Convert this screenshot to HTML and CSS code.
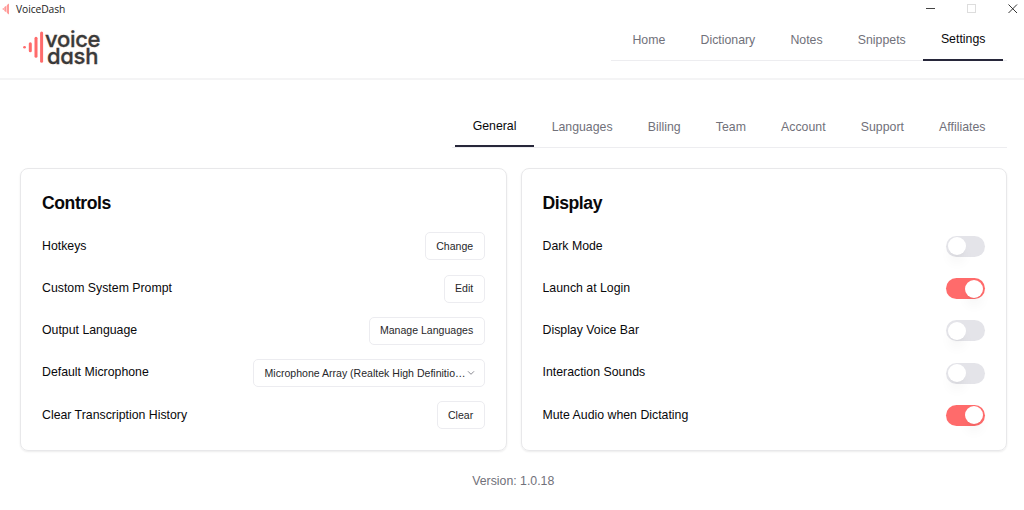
FILE: index.html
```html
<!DOCTYPE html>
<html lang="en">
<head>
  <meta charset="UTF-8">
  <title>VoiceDash</title>
  <link rel="stylesheet" href="styles.css">
</head>
<body>

  <div class="titlebar">
    <svg class="app-icon" width="8" height="12" viewBox="0 0 8 12">
      <path d="M0 6L2 5V7ZM2.3 4L4.4 2.8V9.2L2.3 8ZM4.9 2L7 0.5V11.5L4.9 10Z" fill="#ff9a98"/>
    </svg>
    <span class="app-title">VoiceDash</span>
    <svg class="window-buttons" width="94" height="12" viewBox="0 0 94 12" fill="none">
      <path d="M1 5.5H10" stroke="#444"/>
      <rect x="42.5" y="1.5" width="8" height="8" stroke="#ddd"/>
      <path d="M83.5 1.5L92 10M92 1.5L83.5 10" stroke="#333"/>
    </svg>
  </div>

  <header class="header">
    <div class="logo">
      <svg width="22" height="34" viewBox="0 0 22 34" stroke="#ff6b6b" stroke-linecap="round">
        <path d="M2.5 17.3H2.6" stroke-width="2.6"/>
        <path d="M8.3 13.7V20.7" stroke-width="3"/>
        <path d="M14 8.3V26.2" stroke-width="3"/>
        <path d="M19.6 3V31.3" stroke-width="3"/>
      </svg>
      <div class="logo-text">
        <div class="logo-voice">voice</div>
        <div class="logo-dash">dash</div>
      </div>
    </div>
    <nav class="tabs">
      <a class="tab">Home</a>
      <a class="tab">Dictionary</a>
      <a class="tab">Notes</a>
      <a class="tab">Snippets</a>
      <a class="tab active">Settings</a>
    </nav>
  </header>

  <main class="content">
    <nav class="tabs">
      <a class="tab active">General</a>
      <a class="tab">Languages</a>
      <a class="tab">Billing</a>
      <a class="tab">Team</a>
      <a class="tab">Account</a>
      <a class="tab">Support</a>
      <a class="tab">Affiliates</a>
    </nav>

    <div class="cards">
      <section class="card">
        <h2>Controls</h2>
        <div class="row"><span>Hotkeys</span><button class="btn">Change</button></div>
        <div class="row"><span>Custom System Prompt</span><button class="btn">Edit</button></div>
        <div class="row"><span>Output Language</span><button class="btn">Manage Languages</button></div>
        <div class="row">
          <span>Default Microphone</span>
          <button class="btn select">
            <span>Microphone Array (Realtek High Definitio…</span>
            <svg width="8" height="6" viewBox="0 0 8 6" fill="none">
              <path d="M1 1.3L4 4.3L7 1.3" stroke="#8b8b93"/>
            </svg>
          </button>
        </div>
        <div class="row"><span>Clear Transcription History</span><button class="btn">Clear</button></div>
      </section>

      <section class="card">
        <h2>Display</h2>
        <div class="row"><span>Dark Mode</span><div class="switch"><div class="thumb"></div></div></div>
        <div class="row"><span>Launch at Login</span><div class="switch on"><div class="thumb"></div></div></div>
        <div class="row"><span>Display Voice Bar</span><div class="switch"><div class="thumb"></div></div></div>
        <div class="row"><span>Interaction Sounds</span><div class="switch"><div class="thumb"></div></div></div>
        <div class="row"><span>Mute Audio when Dictating</span><div class="switch on"><div class="thumb"></div></div></div>
      </section>
    </div>

    <div class="version">Version: 1.0.18</div>
  </main>

</body>
</html>
```
FILE: styles.css
```css
* {
  box-sizing: border-box;
}
body {
  margin: 0;
  height: 510px;
  overflow: hidden;
  background-color: #fff;
  font-family: "Liberation Sans", Arial, sans-serif;
  font-size: 12.32px;
  color: #09090b;
}
.titlebar {
  display: flex;
  align-items: center;
  height: 20px;
  padding: 0 5px 2px 2px;
}
.app-title {
  margin-left: 6px;
  font-family: "Open Sans", sans-serif;
  font-size: 10.3px;
  letter-spacing: -0.1px;
  color: #222;
}
.window-buttons {
  margin-left: auto;
}
.header {
  display: flex;
  justify-content: space-between;
  height: 60px;
  padding: 0 17.5px 0 22px;
  border-bottom: 2px solid #f4f4f5;
}
.logo {
  display: flex;
  padding-top: 10px;
}
.logo-text {
  margin-left: 1px;
  padding-top: 1px;
  font-family: Inter, sans-serif;
  font-feature-settings: "cv11";
  font-size: 22px;
  font-weight: 500;
  line-height: 17px;
  letter-spacing: -0.3px;
  color: #3a3a3a;
  -webkit-text-stroke: 0.3px #3a3a3a;
  text-shadow: 0 0 3px #ffe9dc;
}
.logo-dash {
  padding-left: 2px;
}
.tabs {
  display: flex;
  height: 41px;
  padding: 0 3.5px;
  border-bottom: 1px solid #ededf0;
}
.tab {
  padding: 0 17.6px;
  line-height: 40px;
  color: #71717a;
}
.tab.active {
  height: 40px;
  border-bottom: 2px solid #27273a;
  line-height: 39px;
  color: #09090b;
}
.header .tab.active {
  height: 41px;
}
.content {
  padding: 27px 17.5px 0 20px;
}
.content .tabs {
  width: max-content;
  margin-left: auto;
}
.cards {
  display: grid;
  grid-template-columns: 1fr 1fr;
  gap: 14px;
  margin: 20px -0.5px 0 0;
}
.card {
  height: 283px;
  padding: 22px 21px 0;
  border: 1px solid #e8e8ea;
  border-radius: 8px;
  box-shadow: 0 1px 2px rgba(0, 0, 0, 0.08);
}
h2 {
  margin: 0;
  padding-top: 1px;
  height: 34.4px;
  font-size: 17.6px;
  line-height: 22px;
  letter-spacing: -0.44px;
}
.row {
  display: flex;
  align-items: center;
  justify-content: space-between;
  height: 42.2px;
}
.row > span {
  margin-top: -1.2px;
}
.btn {
  height: 28px;
  padding: 0 10.3px 1px;
  background-color: #fff;
  border: 1px solid #ececf0;
  border-radius: 5px;
  font-family: inherit;
  font-size: 10.56px;
  color: #27272a;
}
.select {
  display: flex;
  align-items: center;
  justify-content: space-between;
  width: 232px;
  padding: 0 9px 0 11px;
}
.switch {
  width: 39px;
  height: 21px;
  padding: 1.5px;
  border-radius: 11px;
  background-color: #e4e4e9;
}
.switch.on {
  background-color: #ff6b6b;
}
.thumb {
  width: 18px;
  height: 18px;
  border-radius: 50%;
  background-color: #fff;
  box-shadow: 0 9px 13px -3px rgba(0, 0, 0, 0.07), 0 4px 5px -4px rgba(0, 0, 0, 0.07);
}
.on .thumb {
  margin-left: 17.5px;
}
.version {
  margin-top: 21px;
  line-height: 18px;
  text-align: center;
  color: #71717a;
}
```
